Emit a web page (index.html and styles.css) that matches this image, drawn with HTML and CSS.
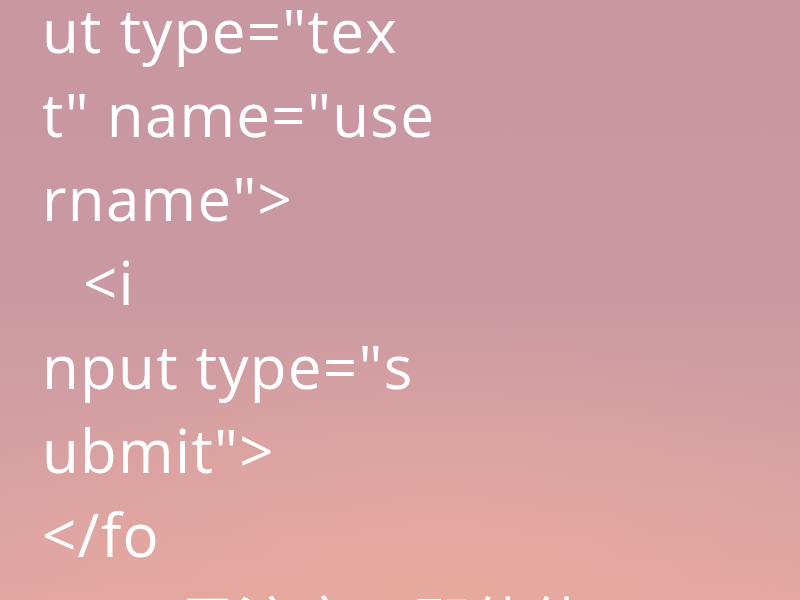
FILE: index.html
```html
<!DOCTYPE html>
<html lang="zh-CN">
<head>
<meta charset="utf-8">
<link rel="stylesheet" href="styles.css">
</head>
<body>
<main class="page">
  <pre class="code"><span class="line">ut type="tex</span><span class="line">t" name="use</span><span class="line">rname"&gt;</span><span class="line indent">&lt;i</span><span class="line">nput type="s</span><span class="line">ubmit"&gt;</span><span class="line">&lt;/fo</span><span class="line last">rm&gt; <span class="cjk">另注意，即使使用</span></span></pre>
</main>
</body>
</html>
```
FILE: styles.css
```css
html, body {
  margin: 0;
  padding: 0;
  height: 100%;
  overflow: hidden;
}
body {
  background:
    radial-gradient(ellipse 70% 45% at 55% 100%, rgba(232,170,158,0.9), rgba(232,170,158,0) 100%),
    linear-gradient(to bottom, #c897a2 0%, #c998a3 45%, #d5a0a2 75%, #e2a6a2 100%);
}
.page {
  padding: 0 0 0 42px;
  margin-top: -12px;
}
.code {
  margin: 0;
  font-family: "Open Sans", "Noto Sans CJK SC", sans-serif;
  font-size: 60px;
  line-height: 84px;
  letter-spacing: 1.3px;
  color: #ffffff;
  white-space: pre;
}
.line {
  display: block;
}
.indent {
  padding-left: 41px;
}
.last {
  height: 84px;
}
.cjk {
  letter-spacing: -1.5px;
  vertical-align: -6px;
}
```
